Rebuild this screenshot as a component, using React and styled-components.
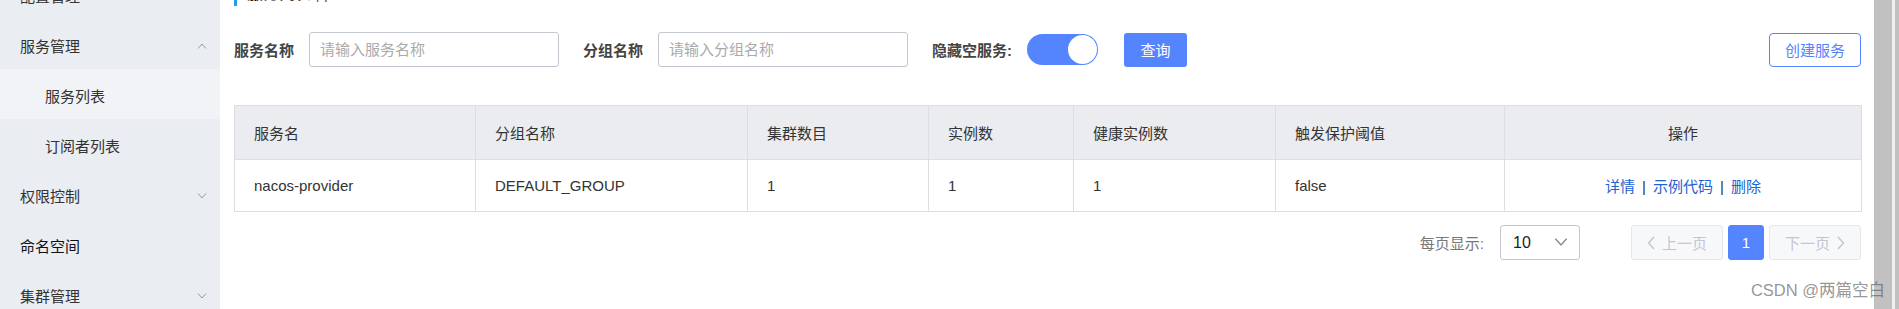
import React from "react";
import styled, { createGlobalStyle } from "styled-components";

const GlobalStyle = createGlobalStyle`
  html, body {
    margin: 0;
    padding: 0;
    background: #fff;
  }
  body {
    font-family: "Liberation Sans", "Noto Sans CJK SC", sans-serif;
    color: #333;
  }
`;

const menu = [
  { label: "配置管理", arrow: "down" },
  { label: "服务管理", arrow: "up" },
  { label: "服务列表", sub: true, active: true },
  { label: "订阅者列表", sub: true },
  { label: "权限控制", arrow: "down" },
  { label: "命名空间", strong: true },
  { label: "集群管理", arrow: "down" },
];

const columns = [
  { title: "服务名", width: 241 },
  { title: "分组名称", width: 272 },
  { title: "集群数目", width: 181 },
  { title: "实例数", width: 145 },
  { title: "健康实例数", width: 202 },
  { title: "触发保护阈值", width: 229 },
  { title: "操作", width: 357, center: true },
];

const rows = [
  { name: "nacos-provider", group: "DEFAULT_GROUP", clusters: 1, count: 1, healthy: 1, threshold: "false" },
];

const Chevron = ({ dir = "down", size = 10, color = "#999" }) => (
  <svg width={size} height={size * 0.6} viewBox="0 0 10 6" fill="none">
    <polyline
      points={dir === "up" ? "1,5.5 5,1 9,5.5" : "1,0.5 5,5 9,0.5"}
      stroke={color}
      strokeWidth="1"
    />
  </svg>
);

const SideArrow = ({ dir }) => (
  <svg width="9" height="14" viewBox="0 0 9 14" fill="none">
    <polyline
      points={dir === "left" ? "7,1 1.5,7 7,13" : "2,1 7.5,7 2,13"}
      stroke="#c4c6cf"
      strokeWidth="1.4"
    />
  </svg>
);

const App = () => {
  return (
    <Shell>
      <GlobalStyle />
      <Sidebar>
        {menu.map((m) => (
          <NavItem key={m.label} $sub={m.sub} $active={m.active} $strong={m.strong}>
            <span>{m.label}</span>
            {m.arrow && <Chevron dir={m.arrow} />}
          </NavItem>
        ))}
      </Sidebar>

      <Main>
        <Title>
          服务列表 <TitleSub>| public</TitleSub>
        </Title>

        <SearchBar>
          <Label>服务名称</Label>
          <Input placeholder="请输入服务名称" />
          <Label>分组名称</Label>
          <Input placeholder="请输入分组名称" />
          <Label>隐藏空服务:</Label>
          <Switch>
            <Knob />
          </Switch>
          <PrimaryButton>查询</PrimaryButton>
          <Spacer />
          <OutlineButton>创建服务</OutlineButton>
        </SearchBar>

        <Table>
          <colgroup>
            {columns.map((c) => (
              <Col key={c.title} $w={c.width} />
            ))}
          </colgroup>
          <thead>
            <tr>
              {columns.map((c) => (
                <HeadCell key={c.title} $center={c.center}>
                  {c.title}
                </HeadCell>
              ))}
            </tr>
          </thead>
          <tbody>
            {rows.map((r) => (
              <tr key={r.name}>
                <Cell>{r.name}</Cell>
                <Cell>{r.group}</Cell>
                <Cell>{r.clusters}</Cell>
                <Cell>{r.count}</Cell>
                <Cell>{r.healthy}</Cell>
                <Cell>{r.threshold}</Cell>
                <Cell $center>
                  <Link>详情</Link>
                  <Sep>|</Sep>
                  <Link>示例代码</Link>
                  <Sep>|</Sep>
                  <Link>删除</Link>
                </Cell>
              </tr>
            ))}
          </tbody>
        </Table>

        <Pager>
          <PagerLabel>每页显示:</PagerLabel>
          <Select>
            <span>10</span>
            <Chevron dir="down" size={14} color="#888" />
          </Select>
          <PageButton $wide disabled>
            <SideArrow dir="left" />
            上一页
          </PageButton>
          <PageButton $current>1</PageButton>
          <PageButton $wide disabled>
            下一页
            <SideArrow dir="right" />
          </PageButton>
        </Pager>
      </Main>

      <ScrollRail />
      <Watermark>CSDN @两篇空白</Watermark>
    </Shell>
  );
};

const Shell = styled.div`
  position: relative;
  display: flex;
  width: 1899px;
  height: 309px;
  overflow: hidden;
`;

const Sidebar = styled.nav`
  width: 220px;
  flex-shrink: 0;
  background: #eaedf1;
  display: flex;
  flex-direction: column;
  margin-top: -31px;
`;

const NavItem = styled.div`
  height: 50px;
  flex-shrink: 0;
  display: flex;
  align-items: center;
  justify-content: space-between;
  padding: 3px 13px 0 ${(p) => (p.$sub ? 45 : 20)}px;
  box-sizing: border-box;
  font-size: 15px;
  color: ${(p) => (p.$strong ? "#111" : "#333")};
  background: ${(p) => (p.$active ? "#f2f3f7" : "transparent")};
`;

const Main = styled.main`
  flex: 1;
  min-width: 0;
  padding: 0 13px 0 14px;
  display: flex;
  flex-direction: column;
`;

const Title = styled.div`
  margin-top: -18px;
  height: 24px;
  line-height: 24px;
  border-left: 3px solid #1f9bf0;
  padding-left: 10px;
  font-size: 16px;
  font-weight: bold;
  color: #111;
`;

const TitleSub = styled.span`
  font-weight: normal;
  color: #666;
`;

const SearchBar = styled.div`
  display: flex;
  align-items: center;
  margin-top: 26px;
  height: 35px;
`;

const Label = styled.span`
  font-size: 15px;
  font-weight: bold;
  color: #444;
  margin-right: 15px;
  white-space: nowrap;
`;

const Input = styled.input`
  width: 250px;
  height: 35px;
  box-sizing: border-box;
  border: 1px solid #c4c6cf;
  border-radius: 3px;
  padding: 0 10px;
  margin-right: 24px;
  font-family: inherit;
  font-size: 15px;
  color: #333;
  outline: none;
  &::placeholder {
    color: #aaa;
  }
`;

const Switch = styled.div`
  width: 71px;
  height: 31px;
  border-radius: 16px;
  background: #5584ff;
  display: flex;
  align-items: center;
  justify-content: flex-end;
  padding: 0 1px;
  box-sizing: border-box;
  margin-right: 26px;
`;

const Knob = styled.div`
  width: 29px;
  height: 29px;
  border-radius: 50%;
  background: #fff;
`;

const PrimaryButton = styled.button`
  width: 63px;
  height: 34px;
  border: none;
  border-radius: 3px;
  background: #5584ff;
  color: #fff;
  font-family: inherit;
  font-size: 15px;
  padding: 0;
`;

const Spacer = styled.div`
  flex: 1;
`;

const OutlineButton = styled.button`
  width: 92px;
  height: 34px;
  border: 1px solid #5584ff;
  border-radius: 4px;
  background: #fff;
  color: #5584ff;
  font-family: inherit;
  font-size: 15px;
  padding: 0;
`;

const Table = styled.table`
  margin-top: 38px;
  width: 1627px;
  border-collapse: collapse;
  table-layout: fixed;
  border: 1px solid #dcdee3;
`;

const Col = styled.col`
  width: ${(p) => p.$w}px;
`;

const HeadCell = styled.th`
  height: 53px;
  background: #ebecf0;
  border: 1px solid #dcdee3;
  padding: 0 19px;
  font-size: 15px;
  font-weight: normal;
  color: #333;
  text-align: ${(p) => (p.$center ? "center" : "left")};
`;

const Cell = styled.td`
  height: 51px;
  border: 1px solid #dcdee3;
  padding: 0 19px;
  font-size: 15px;
  color: #333;
  text-align: ${(p) => (p.$center ? "center" : "left")};
`;

const Link = styled.a`
  color: #2163cf;
  cursor: pointer;
`;

const Sep = styled.span`
  color: #333;
  margin: 0 7px;
`;

const Pager = styled.div`
  display: flex;
  align-items: center;
  justify-content: flex-end;
  margin-top: 13px;
  height: 35px;
`;

const PagerLabel = styled.span`
  font-size: 15px;
  color: #777;
  margin-right: 16px;
`;

const Select = styled.div`
  width: 80px;
  height: 35px;
  box-sizing: border-box;
  border: 1px solid #c4c6cf;
  border-radius: 3px;
  display: flex;
  align-items: center;
  justify-content: space-between;
  padding: 0 11px 0 12px;
  font-size: 16px;
  color: #222;
  margin-right: 46px;
`;

const PageButton = styled.button`
  height: 35px;
  width: ${(p) => (p.$wide ? "92px" : "36px")};
  box-sizing: border-box;
  margin-left: 5px;
  display: flex;
  align-items: center;
  justify-content: center;
  gap: 6px;
  padding: 0;
  border-radius: 3px;
  font-family: inherit;
  font-size: 15px;
  border: 1px solid ${(p) => (p.$current ? "#5584ff" : "#e6e7eb")};
  background: ${(p) => (p.$current ? "#5584ff" : "#f7f8fa")};
  color: ${(p) => (p.$current ? "#fff" : "#c4c6cf")};
`;

const ScrollRail = styled.div`
  width: 25px;
  flex-shrink: 0;
  background: linear-gradient(
    to right,
    #c1c1c1 0,
    #c1c1c1 18px,
    #f1f1f1 18px,
    #f1f1f1 21px,
    #c1c1c1 21px
  );
`;

const Watermark = styled.div`
  position: absolute;
  right: 14px;
  bottom: 8px;
  font-size: 16.5px;
  color: rgba(90, 90, 90, 0.65);
  white-space: nowrap;
`;

export default App;
